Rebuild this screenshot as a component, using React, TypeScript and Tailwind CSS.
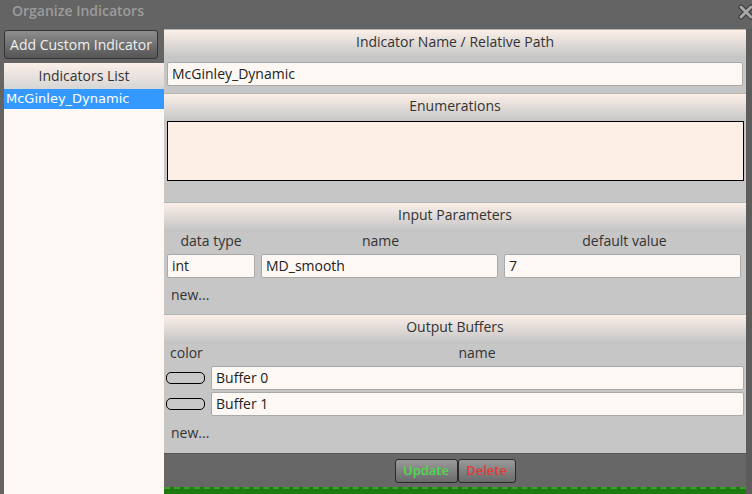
const font = { fontFamily: '"Open Sans", "Noto Sans", sans-serif' }

function SectionHeader({ title }: { title: string }) {
  return (
    <div className="h-[27px] border-t border-[#b4b4b4] bg-gradient-to-b from-[#fcefe8] to-[#c8c8c8] text-center text-[14px] leading-[23px] text-[#333]">
      {title}
    </div>
  )
}

function Field({ value, className }: { value: string; className?: string }) {
  return (
    <div
      className={`h-[24px] rounded-[2px] border border-[#a9a9a9] bg-[#fdf8f4] pl-[4px] text-[14px] leading-[22px] text-[#222] ${className ?? ''}`}
    >
      {value}
    </div>
  )
}

export default function App() {
  return (
    <div
      className="relative flex h-[494px] w-[752px] flex-col overflow-hidden bg-[#646464]"
      style={font}
    >
      <div className="h-[29px] shrink-0 pl-[12px] text-[14px] font-semibold leading-[22px] text-[#9c9c9c]">
        Organize Indicators
      </div>
      <svg
        className="absolute right-[-2px] top-[4px]"
        width="16"
        height="16"
        viewBox="0 0 16 16"
      >
        <path d="M3 3 L13 13 M13 3 L3 13" stroke="#3a3a3a" strokeWidth="5" strokeLinecap="round" />
        <path d="M3 3 L13 13 M13 3 L3 13" stroke="#a8a8a8" strokeWidth="3" strokeLinecap="round" />
      </svg>

      <div className="flex flex-1">
        <div className="flex w-[164px] shrink-0 flex-col pl-[4px]">
          <button className="mt-[1px] h-[29px] w-[154px] rounded-[3px] border border-[#333] bg-gradient-to-b from-[#8e8e8e] to-[#555] text-[14px] text-[#f0f0f0]">
            Add Custom Indicator
          </button>
          <div className="mt-[4px] flex-1 bg-[#fdf8f4]">
            <div className="h-[26px] bg-gradient-to-b from-[#fcefe8] to-[#d6d6d6] text-center text-[14px] leading-[26px] text-[#333]">
              Indicators List
            </div>
            <div
              className="h-[20px] bg-[#3399ff] pl-[2px] text-[13px] leading-[20px] text-white"
              style={{ fontFamily: '"DejaVu Sans", Verdana, sans-serif' }}
            >
              McGinley_Dynamic
            </div>
          </div>
        </div>

        <div className="flex w-[582px] flex-col">
          <div className="bg-[#c6c6c6]">
            <SectionHeader title="Indicator Name / Relative Path" />
            <div className="px-[3px] pb-[7px] pt-[6px]">
              <Field value="McGinley_Dynamic" />
            </div>
          </div>

          <div className="bg-[#c6c6c6]">
            <SectionHeader title="Enumerations" />
            <div className="px-[3px] pb-[21px] pt-[1px]">
              <div className="h-[60px] w-[577px] border border-black bg-[#fdeee6]" />
            </div>
          </div>

          <div className="bg-[#c6c6c6]">
            <SectionHeader title="Input Parameters" />
            <div className="grid grid-cols-[88px_237px_237px] gap-x-[7px] px-[3px] pt-[3px] text-center text-[14px] leading-[17px] text-[#333]">
              <div>data type</div>
              <div>name</div>
              <div>default value</div>
            </div>
            <div className="mt-[5px] grid grid-cols-[88px_237px_237px] gap-x-[6px] px-[3px]">
              <Field value="int" />
              <Field value="MD_smooth" />
              <Field value="7" />
            </div>
            <div className="h-[36px] pl-[7px] pt-[7px] text-[14px] leading-[20px] text-[#333]">
              new...
            </div>
          </div>

          <div className="flex-1 bg-[#c6c6c6]">
            <SectionHeader title="Output Buffers" />
            <div className="flex pt-[3px] text-[14px] leading-[17px] text-[#333]">
              <div className="w-[44px] pl-[6px]">color</div>
              <div className="flex-1 text-center">name</div>
            </div>
            <div className="mt-[5px] flex flex-col gap-[2px] px-[2px]">
              {['Buffer 0', 'Buffer 1'].map((b) => (
                <div key={b} className="flex items-center gap-[6px]">
                  <div className="h-[12px] w-[39px] rounded-[5px] border border-black bg-[#c8c8c8]" />
                  <Field value={b} className="flex-1" />
                </div>
              ))}
            </div>
            <div className="pl-[7px] pt-[7px] text-[14px] leading-[20px] text-[#333]">
              new...
            </div>
          </div>

          <div className="flex h-[34px] shrink-0 items-center justify-center border-t border-[#555] bg-[#676767]">
            <button className="h-[24px] w-[63px] rounded-[3px] border border-[#2a2a2a] bg-gradient-to-b from-[#9a9a9a] to-[#6a6a6a] text-[13px] font-semibold text-[#4fd84f]">
              Update
            </button>
            <button className="h-[24px] w-[58px] rounded-[3px] border border-[#2a2a2a] bg-gradient-to-b from-[#9a9a9a] to-[#6a6a6a] text-[13px] font-semibold text-[#e03a3a]">
              Delete
            </button>
          </div>
          <div className="h-[7px] shrink-0 border-t-2 border-dashed border-[#3aa02a] bg-[#1c7a10]" />
        </div>
        <div className="w-[6px] bg-[#5c5c5c]" />
      </div>
    </div>
  )
}
